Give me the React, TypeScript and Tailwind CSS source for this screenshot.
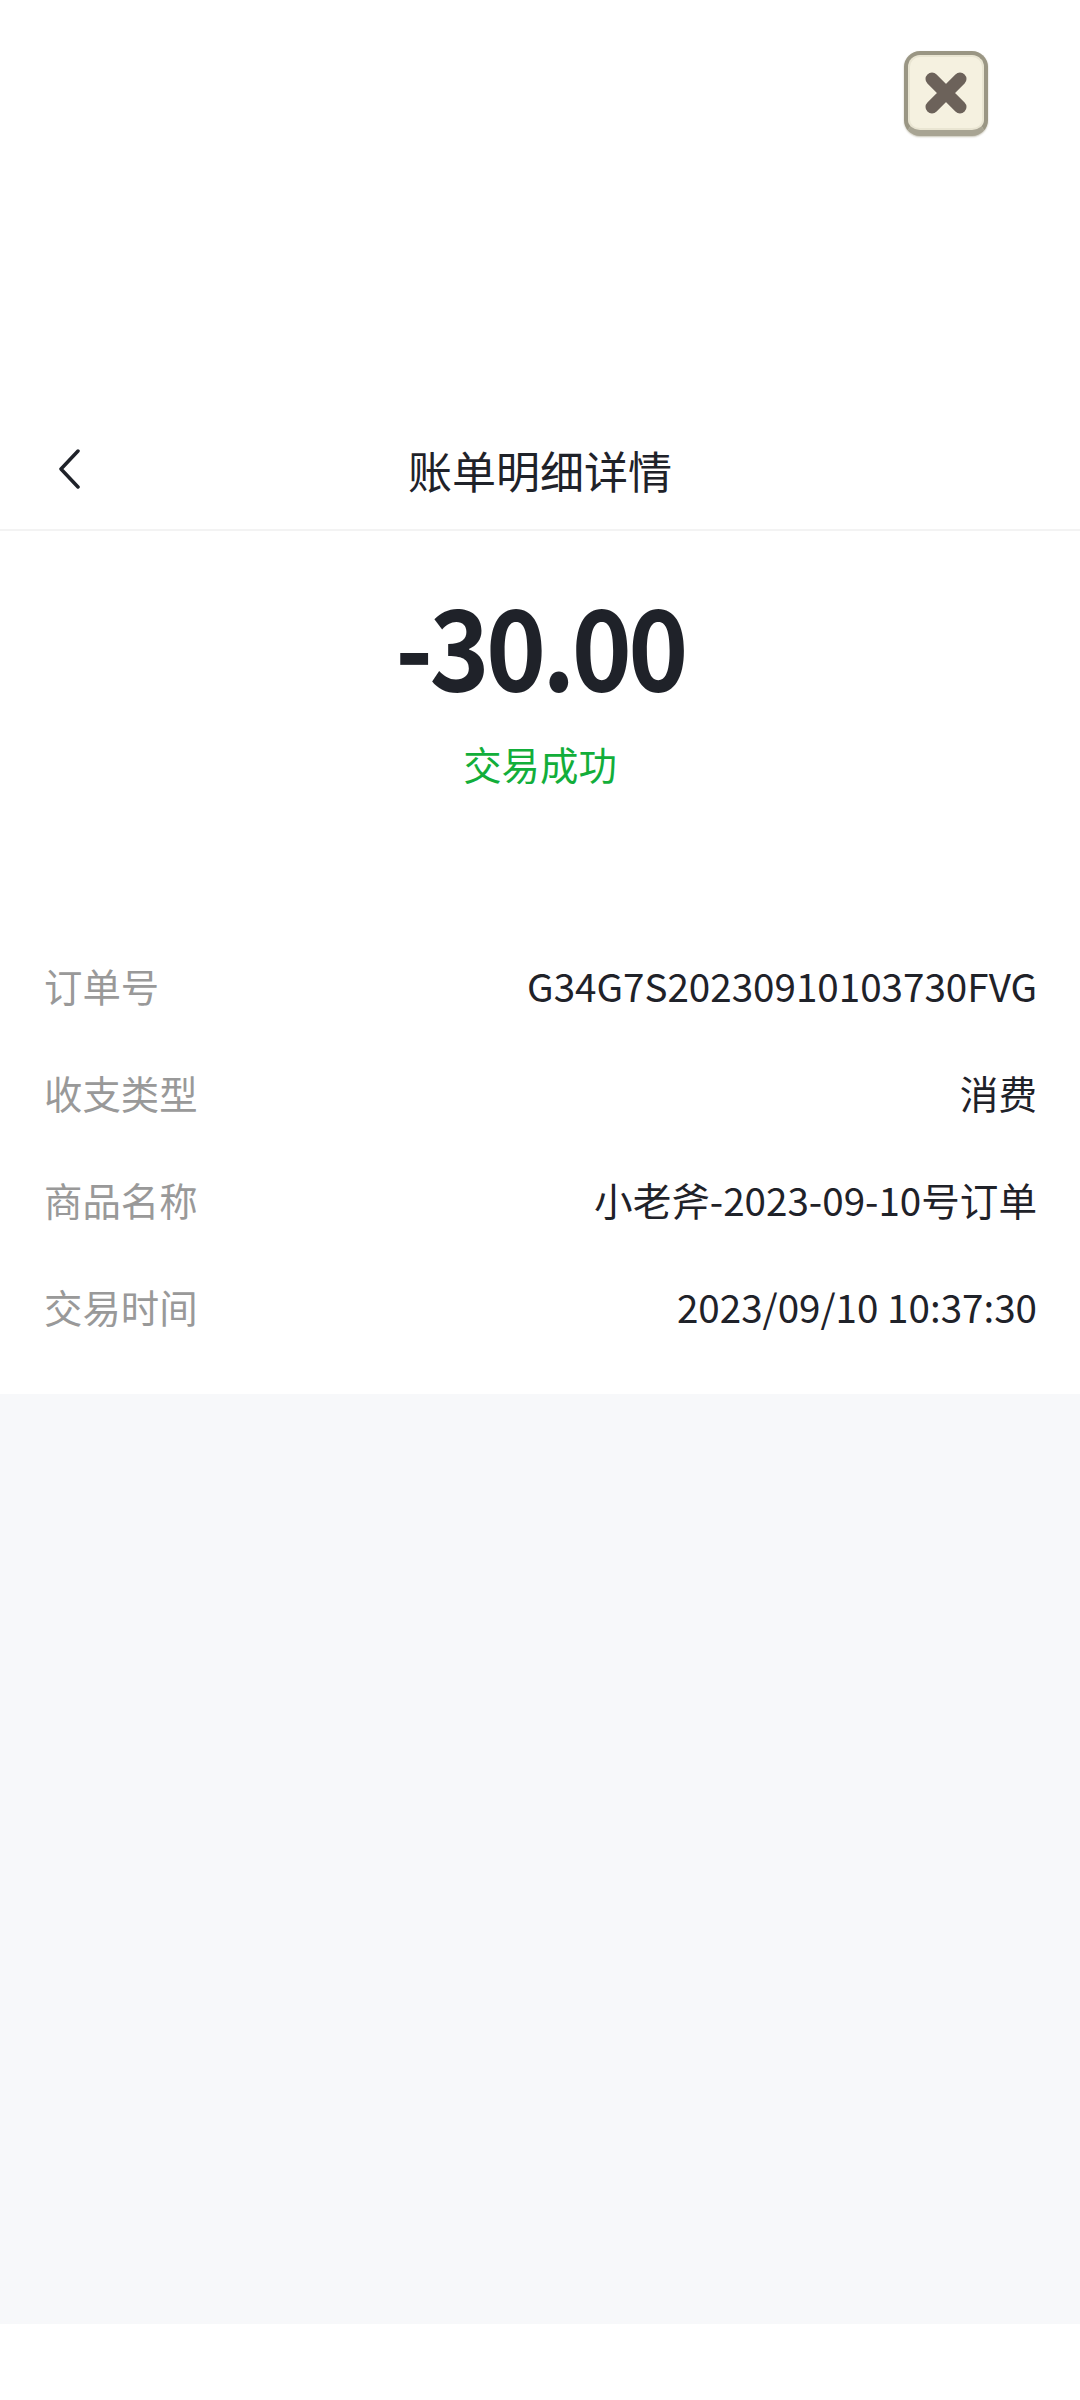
const rows = [
  { label: "订单号", value: "G34G7S20230910103730FVG" },
  { label: "收支类型", value: "消费" },
  { label: "商品名称", value: "小老斧-2023-09-10号订单" },
  { label: "交易时间", value: "2023/09/10 10:37:30" },
];

function CloseButton() {
  return (
    <div className="w-[84px] h-[85px] rounded-[16px] border-[4px] border-[#9a9684] border-b-[6px] border-b-[#a8a493] bg-[#f5f1e0] shadow-[inset_0_0_0_2px_#e9e5d2,0_1px_2px_#c9c6b8] flex items-center justify-center">
      <svg width="48" height="48" viewBox="0 0 48 48">
        <path d="M10 10 L38 38 M38 10 L10 38" stroke="#6c625a" strokeWidth="13" strokeLinecap="round" />
      </svg>
    </div>
  );
}

export default function App() {
  return (
    <div className="w-[1080px] h-[2400px] bg-white flex flex-col font-['Noto_Sans_CJK_SC','Noto_Sans',sans-serif]">
      <div className="h-[420px] flex justify-end pt-[51px] pr-[92px]">
        <CloseButton />
      </div>

      <div className="h-[111px] relative flex items-center justify-center pb-[10px] border-b-2 border-[#f3f3f3]">
        <svg className="absolute left-[56px] top-[29px]" width="26" height="40" viewBox="0 0 26 40" fill="none">
          <path d="M22 2 L5 20 L22 38" stroke="#1f2229" strokeWidth="3.5" strokeLinecap="round" strokeLinejoin="round" />
        </svg>
        <span className="text-[44px] leading-none text-[#1f2229]">账单明细详情</span>
      </div>

      <div className="flex flex-col items-center pt-[51px]">
        <div className="text-[112px] leading-[120px] font-bold text-[#1f2229] tracking-[-4px] scale-x-[0.91]">-30.00</div>
        <div className="mt-[33px] text-[38.4px] leading-[56px] text-[#12ae3a]">交易成功</div>
      </div>

      <div className="mt-[166px] flex flex-col gap-[51px] pl-[44px] pr-[43px] pb-[60px]">
        {rows.map((row) => (
          <div key={row.label} className="flex justify-between items-center h-[56px] text-[38.4px] leading-none">
            <span className="text-[#999999]">{row.label}</span>
            <span className="text-[38.6px] text-[#1f2229]">{row.value}</span>
          </div>
        ))}
      </div>

      <div className="h-[930px] bg-[#f7f8fa]" />
    </div>
  );
}
